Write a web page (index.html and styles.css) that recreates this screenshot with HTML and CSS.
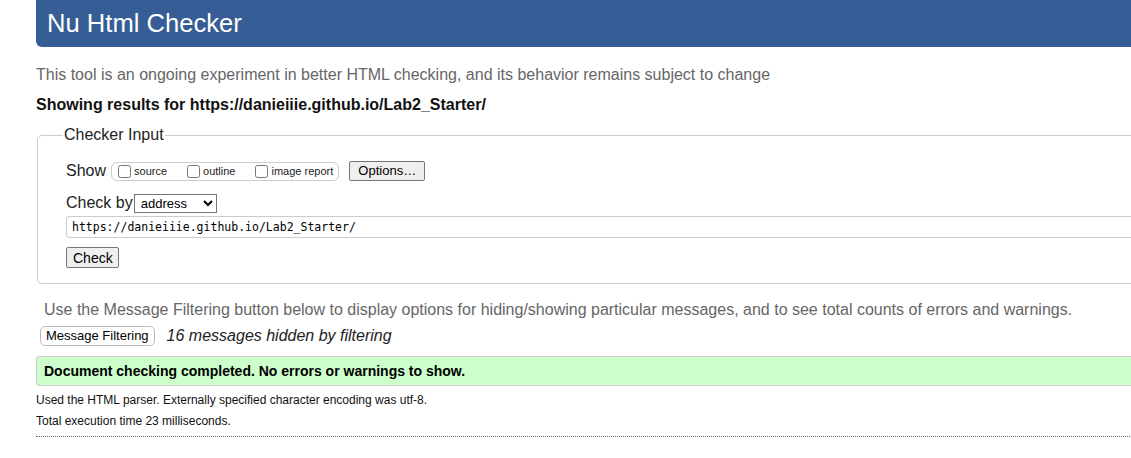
FILE: index.html
```html
<!DOCTYPE html>
<html lang="en">
<head>
<meta charset="utf-8">
<title>Nu Html Checker</title>
<link rel="stylesheet" href="styles.css">
</head>
<body>
<div class="page">
  <h1 class="title">Nu Html Checker</h1>
  <p class="intro">This tool is an ongoing experiment in better HTML checking, and its behavior remains subject to change</p>
  <p class="results">Showing results for https://danieiiie.github.io/Lab2_Starter/</p>
  <fieldset class="checker">
    <legend class="checker-legend">Checker Input</legend>
    <div class="row show-row">
      <span class="row-label">Show</span>
      <span class="show-group">
        <label class="opt"><input type="checkbox" class="cb">source</label>
        <label class="opt"><input type="checkbox" class="cb">outline</label>
        <label class="opt"><input type="checkbox" class="cb">image report</label>
      </span>
      <button class="btn options-btn" type="button">Options…</button>
    </div>
    <div class="row checkby-row">
      <span class="row-label">Check by</span>
      <select class="select"><option>address</option></select>
    </div>
    <div class="url-input">https://danieiiie.github.io/Lab2_Starter/</div>
    <button class="btn check-btn" type="button">Check</button>
  </fieldset>
  <p class="filter-note">Use the Message Filtering button below to display options for hiding/showing particular messages, and to see total counts of errors and warnings.</p>
  <div class="filter-row">
    <button class="btn filter-btn" type="button">Message Filtering</button>
    <span class="hidden-count">16 messages hidden by filtering</span>
  </div>
  <div class="success">Document checking completed. No errors or warnings to show.</div>
  <p class="small first">Used the HTML parser. Externally specified character encoding was utf-8.</p>
  <p class="small">Total execution time 23 milliseconds.</p>
  <div class="dotted"></div>
</div>
</body>
</html>
```

FILE: styles.css
```css
html, body {
  margin: 0;
  padding: 0;
  overflow: hidden;
  background: #fff;
}

body {
  font-family: "Liberation Sans", Arial, sans-serif;
  color: #000;
}

.page {
  width: 1200px;
  margin-left: 36px;
}

.title {
  margin: 0;
  height: 47px;
  line-height: 47px;
  padding: 0 11px;
  font-size: 25.6px;
  font-weight: normal;
  color: #fff;
  background: #365d95;
  border-radius: 0 0 6px 6px;
}

.intro {
  margin: 19px 0 0;
  font-size: 16px;
  line-height: 18px;
  color: #666;
}

.results {
  margin: 12px 0 0;
  font-size: 16px;
  line-height: 18px;
  font-weight: bold;
  color: #111;
}

.checker {
  margin: 12px 0 0 1px;
  padding: 17px 0 15px 28px;
  border: 1px solid #ccc;
  border-radius: 5px;
}

.checker-legend {
  margin-left: -3px;
  padding: 0 1px;
  font-size: 16px;
  line-height: 18px;
  color: #222;
}

.row {
  display: flex;
  align-items: center;
}

.row-label {
  font-size: 16px;
  color: #222;
}

.show-row {
  height: 20px;
}

.show-group {
  display: inline-flex;
  align-items: center;
  margin-left: 5px;
  height: 19px;
  padding: 0 5px 0 5px;
  border: 1px solid #ccc;
  border-radius: 6px;
  box-sizing: border-box;
}

.opt {
  display: inline-flex;
  align-items: center;
  font-size: 11px;
  color: #222;
  margin-right: 19px;
}

.opt:last-child {
  margin-right: 0;
}

.cb {
  width: 13px;
  height: 13px;
  margin: 0 3px 0 1px;
}

.btn {
  font-family: "Liberation Sans", Arial, sans-serif;
  font-size: 13px;
  color: #000;
  background: #efefef;
  border: 1px solid #767676;
  border-radius: 2px;
  padding: 0 6px;
  height: 20px;
  line-height: 18px;
}

.options-btn {
  margin-left: 10px;
  width: 76px;
}

.checkby-row {
  margin-top: 12px;
  height: 20px;
}

.select {
  margin-left: 1px;
  width: 83px;
  height: 19px;
  font-family: "Liberation Sans", Arial, sans-serif;
  font-size: 13px;
  padding: 0 0 0 2px;
  border: 1px solid #767676;
  border-radius: 0;
  background: #fff;
}

.url-input {
  margin-top: 3px;
  height: 20px;
  line-height: 20px;
  padding: 0 5px;
  border: 1px solid #ccc;
  border-right: none;
  border-radius: 4px 0 0 4px;
  font-family: "DejaVu Sans Mono", "Liberation Mono", monospace;
  font-size: 11.5px;
  color: #000;
}

.check-btn {
  display: block;
  margin-top: 9px;
  width: 53px;
  height: 21px;
  font-size: 14px;
}

.filter-note {
  margin: 17px 0 0 8px;
  font-size: 16px;
  line-height: 18px;
  color: #666;
}

.filter-row {
  display: flex;
  align-items: center;
  margin: 7px 0 0 4px;
}

.filter-btn {
  background: #fff;
  border: 1px solid #bbb;
  border-radius: 5px;
  height: 20px;
  padding: 0 5px;
}

.hidden-count {
  margin-left: 12px;
  font-size: 16px;
  font-style: italic;
  color: #222;
}

.success {
  margin-top: 10px;
  height: 28px;
  line-height: 28px;
  padding-left: 7px;
  background: #ccffcc;
  border: 1px solid #ccc;
  border-right: none;
  border-radius: 4px 0 0 4px;
  font-size: 14px;
  font-weight: bold;
  color: #000;
}

.small {
  margin: 0;
  font-size: 12px;
  line-height: 21px;
  color: #111;
}

.small.first {
  margin-top: 4px;
}

.dotted {
  margin-top: 4px;
  border-top: 1px dotted #666;
}
```
